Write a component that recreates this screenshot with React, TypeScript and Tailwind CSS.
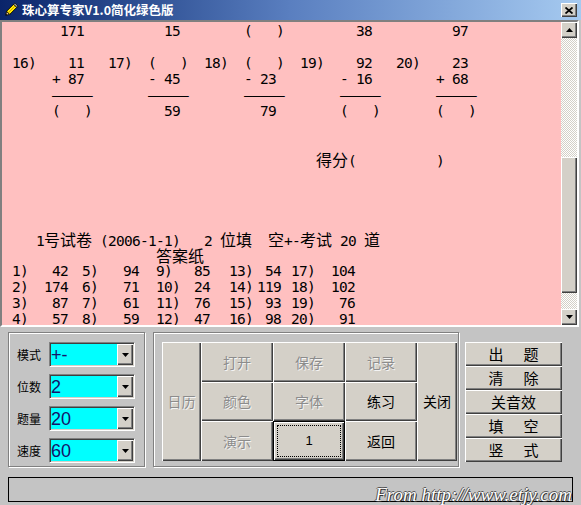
import React from 'react';

// 5 problems per row, each column is 12 mono chars: 5 for the label, 5 for the sum block
const cell = (label: string, block: string) => label.padEnd(5) + block.padEnd(7);
const row = (labels: string[], blocks: string[]) => blocks.map((b, i) => cell(labels[i] ?? '', b)).join('');
const none = ['', '', '', '', ''];
const bar = '–––––';

const problemLines = [
  row(none, [' 171', '  15', '(   )', '  38', '  97']),
  '',
  row(['16)', '17)', '18)', '19)', '20)'], ['  11', '(   )', '(   )', '  92', '  23']),
  row(none, ['+ 87', '- 45', '- 23', '- 16', '+ 68']),
  row(none, [bar, bar, bar, bar, bar]),
  row(none, ['(   )', '  59', '  79', '(   )', '(   )']),
];

const answers: [string, string][][] = [
  [['1)', '42'], ['5)', '94'], ['9)', '85'], ['13)', '54'], ['17)', '104']],
  [['2)', '174'], ['6)', '71'], ['10)', '24'], ['14)', '119'], ['18)', '102']],
  [['3)', '87'], ['7)', '61'], ['11)', '76'], ['15)', '93'], ['19)', '76']],
  [['4)', '57'], ['8)', '59'], ['12)', '47'], ['16)', '98'], ['20)', '91']],
];
// column pitch and label-to-number span of the answer sheet
const ansCols = ['w-[70px]', 'w-[74px]', 'w-[73px]', 'w-[62px]', 'w-[80px]'];
const ansSpan = ['w-[56px]', 'w-[57px]', 'w-[54px]', 'w-[52px]', 'w-[64px]'];

const Cjk = ({ children }: { children: React.ReactNode }) => (
  <span className="font-['Noto_Sans_CJK_SC'] text-[16px] leading-[16px] tracking-normal">{children}</span>
);

const Line = ({ children }: { children?: React.ReactNode }) => (
  <div className="h-[16px] leading-[16px] whitespace-pre">{children}</div>
);

const raised =
  'bg-[#d4d0c8] shadow-[inset_1px_1px_0_#ffffff,inset_-1px_-1px_0_#404040,inset_-2px_-2px_0_#808080]';
const sunken =
  'border border-t-[#808080] border-l-[#808080] border-b-white border-r-white shadow-[inset_1px_1px_0_#404040,inset_-1px_-1px_0_#d4d0c8]';
const etched = 'border border-[#808080] shadow-[1px_1px_0_#ffffff,inset_1px_1px_0_#ffffff]';
const disabledText = 'text-[#8c8c8c] [text-shadow:1px_1px_0_#f4f4f4]';

const Arrow = ({ up }: { up?: boolean }) => (
  <svg width="7" height="4" viewBox="0 0 7 4">
    <polygon points={up ? '0,4 7,4 3.5,0' : '0,0 7,0 3.5,4'} fill="#000" />
  </svg>
);

const Pencil = () => (
  <svg width="16" height="16" viewBox="0 0 16 16">
    <g transform="rotate(-45 8 8)">
      <polygon points="0.5,8 4,5.8 4,10.2" fill="#e8c89a" stroke="#000" strokeWidth="0.8" />
      <polygon points="0.5,8 1.8,7.2 1.8,8.8" fill="#000" />
      <rect x="4" y="5.8" width="10" height="4.4" fill="#ffe800" stroke="#000" strokeWidth="0.8" />
      <line x1="4" y1="8" x2="14" y2="8" stroke="#c89600" strokeWidth="0.8" />
      <rect x="14" y="5.8" width="1.6" height="4.4" fill="#c0c0c0" stroke="#000" strokeWidth="0.8" />
    </g>
  </svg>
);

const Combo = ({ label, value }: { label: string; value: string }) => (
  <div className="flex items-center h-[25px]">
    <span className="w-[32px] text-[12px] text-black">{label}</span>
    <div className={`w-[86px] h-[25px] bg-[#00ffff] flex items-center ${sunken}`}>
      <span className="flex-1 pl-[1px] font-['Liberation_Sans'] text-[18px] leading-none text-[#14146a]">{value}</span>
      <div className={`w-[16px] h-[21px] mr-[1px] flex items-center justify-center ${raised}`}>
        <Arrow />
      </div>
    </div>
  </div>
);

const GridBtn = ({ text, off, className = '' }: { text: string; off?: boolean; className?: string }) => (
  <div className={`flex items-center justify-center text-[14px] ${raised} ${off ? disabledText : 'text-black'} ${className}`}>
    {text}
  </div>
);

const SideBtn = ({ chars, gap }: { chars: string[]; gap: string }) => (
  <div className={`h-[24px] flex items-center justify-center text-[15px] text-black ${raised} ${gap}`}>
    {chars.map((c) => (
      <span key={c}>{c}</span>
    ))}
  </div>
);

export default function App() {
  return (
    <div className="w-[581px] h-[505px] bg-[#c4c4c4] flex flex-col overflow-hidden relative font-['Noto_Sans_CJK_SC']">
      {/* title bar */}
      <div className="h-[20px] shrink-0 bg-linear-to-r from-[#0a246a] via-[#5a7fc0] to-[#a6caf0] flex items-center pl-[3px]">
        <Pencil />
        <span className="ml-[3px] text-white font-bold text-[12.5px] leading-none">珠心算专家V1.0简化绿色版</span>
        <div className={`ml-auto mr-[4px] w-[16px] h-[14px] flex items-center justify-center ${raised}`}>
          <svg width="8" height="7" viewBox="0 0 8 7">
            <path d="M0.5 0.5 L7.5 6.5 M7.5 0.5 L0.5 6.5" stroke="#000" strokeWidth="1.8" />
          </svg>
        </div>
      </div>

      {/* test sheet */}
      <div className={`w-[579px] h-[307px] shrink-0 flex ${sunken} border-2`}>
        <div className="w-[559px] bg-[#ffc0c0] pt-[1px] pl-[10px] overflow-hidden font-['DejaVu_Sans_Mono'] text-[14.5px] tracking-[-0.73px] text-black">
          {problemLines.map((l, i) => (
            <Line key={i}>{l}</Line>
          ))}
          <Line />
          <Line />
          <Line>
            {' '.repeat(38)}
            <Cjk>得分</Cjk>
            {'(          )'}
          </Line>
          <Line />
          <Line />
          <Line />
          <Line />
          <Line>
            {'   1'}
            <Cjk>号试卷</Cjk>
            {' (2006-1-1)   2 '}
            <Cjk>位填</Cjk>
            {'  '}
            <Cjk>空</Cjk>
            {'+-'}
            <Cjk>考试</Cjk>
            {' 20 '}
            <Cjk>道</Cjk>
          </Line>
          <Line>
            {' '.repeat(18)}
            <Cjk>答案纸</Cjk>
          </Line>
          {answers.map((r, i) => (
            <div key={i} className="h-[16px] leading-[16px] flex">
              {r.map(([lab, num], j) => (
                <div key={j} className={`${ansCols[j]} shrink-0`}>
                  <div className={`${ansSpan[j]} flex justify-between`}>
                    <span>{lab}</span>
                    <span>{num}</span>
                  </div>
                </div>
              ))}
            </div>
          ))}
        </div>
        {/* scrollbar */}
        <div className="w-[16px] flex flex-col">
          <div className={`h-[16px] flex items-center justify-center ${raised}`}>
            <Arrow up />
          </div>
          <div className="flex-1 flex flex-col bg-[repeating-conic-gradient(#d4d0c8_0_25%,#ffffff_0_50%)] [background-size:2px_2px]">
            <div className="h-[119px]" />
            <div className={`h-[136px] ${raised}`} />
          </div>
          <div className={`h-[16px] flex items-center justify-center ${raised}`}>
            <Arrow />
          </div>
        </div>
      </div>

      {/* settings and commands */}
      <div className="flex-1 px-[8px] pt-[5px] flex flex-col">
        <div className="flex">
          <div className={`w-[137px] h-[135px] pt-[9px] pl-[8px] flex flex-col gap-[7px] ${etched}`}>
            <Combo label="模式" value="+-" />
            <Combo label="位数" value="2" />
            <Combo label="题量" value="20" />
            <Combo label="速度" value="60" />
          </div>

          <div className={`ml-[8px] w-[306px] h-[135px] pt-[9px] pl-[8px] ${etched}`}>
            <div className="grid grid-cols-[39px_72px_72px_72px_40px] grid-rows-[40px_39px_40px]">
              <GridBtn text="日历" off className="row-span-3" />
              <GridBtn text="打开" off />
              <GridBtn text="保存" off />
              <GridBtn text="记录" off />
              <GridBtn text="关闭" className="row-span-3 col-start-5 row-start-1" />
              <GridBtn text="颜色" off />
              <GridBtn text="字体" off />
              <GridBtn text="练习" />
              <GridBtn text="演示" off />
              <div className="border border-black flex">
                <div className={`flex-1 flex items-center justify-center p-[3px] ${raised}`}>
                  <div className="w-full h-full border border-dotted border-black flex items-center justify-center font-['Liberation_Sans'] text-[13px] text-black">
                    1
                  </div>
                </div>
              </div>
              <GridBtn text="返回" />
            </div>
          </div>

          <div className="ml-[6px] mt-[10px] w-[97px] flex flex-col">
            <SideBtn chars={['出', '题']} gap="gap-[20px]" />
            <SideBtn chars={['清', '除']} gap="gap-[20px]" />
            <SideBtn chars={['关', '音', '效']} gap="gap-0" />
            <SideBtn chars={['填', '空']} gap="gap-[20px]" />
            <SideBtn chars={['竖', '式']} gap="gap-[20px]" />
          </div>
        </div>

        {/* status bar */}
        <div className="mt-[10px] w-[565px] h-[25px] border border-black" />
      </div>

      <span className="absolute right-[9px] bottom-[1px] font-['Liberation_Serif'] italic text-[19px] leading-none text-white [text-shadow:1px_1px_0_#333,-1px_0_0_#555,0_-1px_0_#555]">
        From http://www.etjy.com
      </span>
    </div>
  );
}
